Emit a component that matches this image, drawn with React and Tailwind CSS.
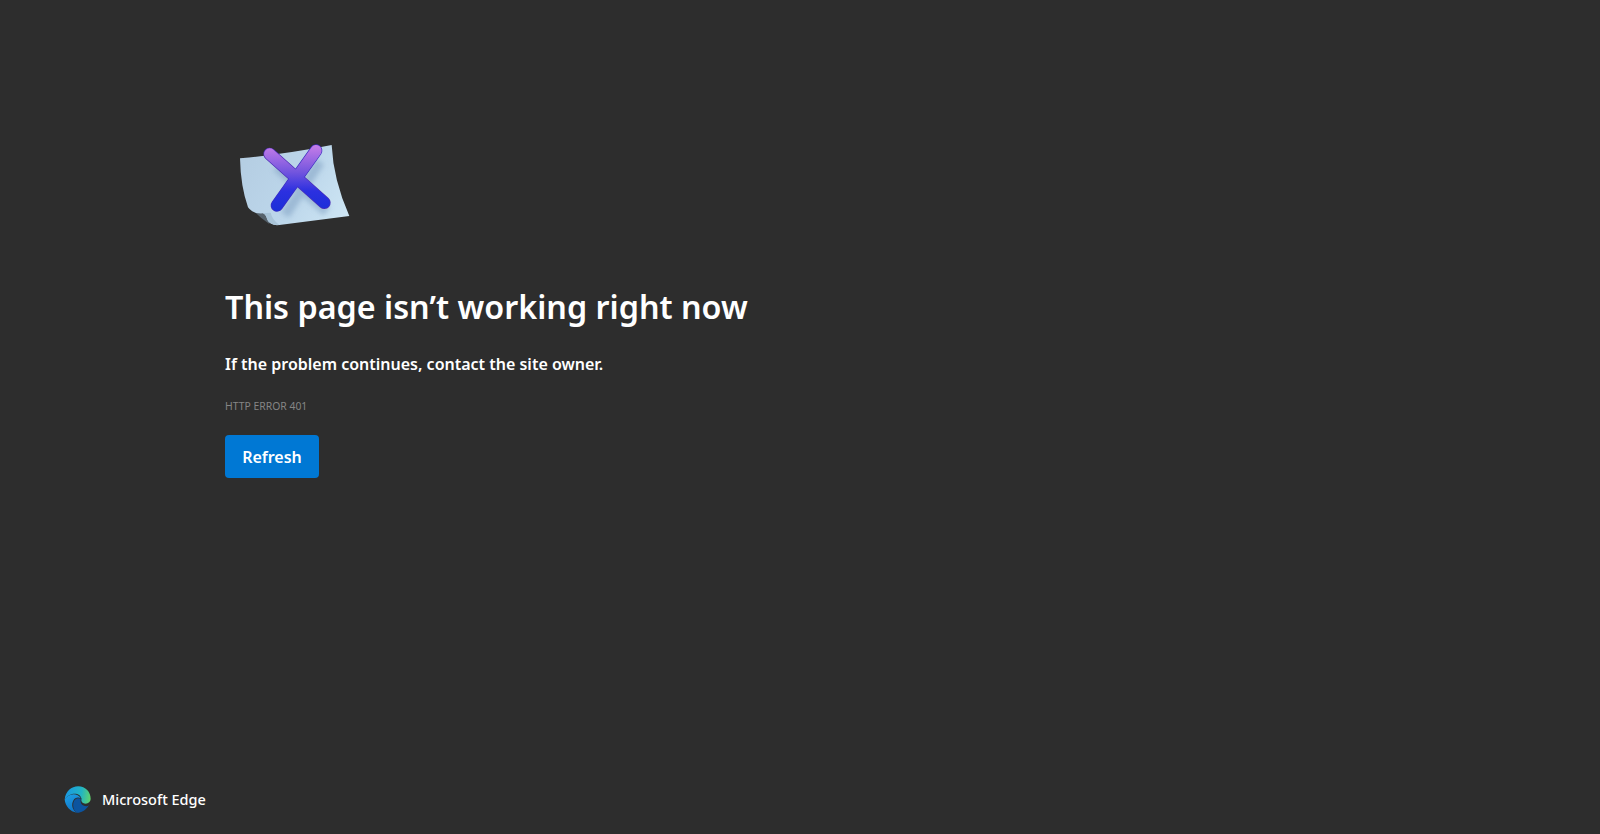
import React from 'react';

function ErrorIcon() {
  return (
    <svg width="120" height="92" viewBox="48 30 360 276" fill="none">
      <defs>
        <linearGradient id="paper" x1="60" y1="80" x2="388" y2="270" gradientUnits="userSpaceOnUse">
          <stop offset="0" stopColor="#b4cde2" />
          <stop offset="0.55" stopColor="#bdd7eb" />
          <stop offset="1" stopColor="#cfe7f5" />
        </linearGradient>
        <linearGradient id="cross" x1="230" y1="50" x2="230" y2="240" gradientUnits="userSpaceOnUse">
          <stop offset="0" stopColor="#c27be8" />
          <stop offset="0.4" stopColor="#7355de" />
          <stop offset="0.7" stopColor="#2c30e0" />
          <stop offset="1" stopColor="#1c2fd8" />
        </linearGradient>
        <filter id="blur" x="-20%" y="-20%" width="140%" height="140%">
          <feGaussianBlur stdDeviation="8" />
        </filter>
        <filter id="soft" x="-5%" y="-5%" width="110%" height="110%">
          <feGaussianBlur stdDeviation="1.8" />
        </filter>
      </defs>
      <path d="M104 246 Q122 264 148 282 L150 250 Z" fill="#56626c" filter="url(#soft)" />
      <g filter="url(#soft)">
        <path
          d="M60 85 Q200 72 335 45 Q340 150 388 258 L178 285 Q150 288 142 268 Q136 250 128 250 Q98 252 84 232 Q62 170 60 85 Z"
          fill="url(#paper)"
        />
        <path d="M128 250 Q138 252 142 270 Q150 286 178 285 Q156 268 152 248 Z" fill="#a9c4d8" />
      </g>
      <path d="M170 110 L320 245 M300 95 L195 255" stroke="#7b9dc0" strokeOpacity="0.5" strokeWidth="30" filter="url(#blur)" />
      <path d="M149 72 L313 218" stroke="#4c2fb5" strokeWidth="38" strokeLinecap="round" />
      <path d="M288 62 L171 226" stroke="#3a2cc0" strokeWidth="38" strokeLinecap="round" />
      <path d="M149 72 L313 218 M288 62 L171 226" stroke="url(#cross)" strokeWidth="34" strokeLinecap="round" />
    </svg>
  );
}

function EdgeLogo() {
  return (
    <svg width="27" height="27" viewBox="0 0 80 80" fill="none">
      <defs>
        <linearGradient id="edgeTop" x1="6" y1="30" x2="78" y2="40" gradientUnits="userSpaceOnUse">
          <stop offset="0" stopColor="#1a9be0" />
          <stop offset="0.6" stopColor="#22b4c4" />
          <stop offset="1" stopColor="#5fd36c" />
        </linearGradient>
        <linearGradient id="edgeLeft" x1="8" y1="30" x2="30" y2="76" gradientUnits="userSpaceOnUse">
          <stop offset="0" stopColor="#1c9be2" />
          <stop offset="1" stopColor="#0f74c8" />
        </linearGradient>
      </defs>
      <path d="M74 56 C64 74 48 80 38 79 C28 74 24 56 30 44 C34 36 42 34 50 38 C46 50 54 60 66 60 C69 60 72 58 74 56 Z" fill="#0c549f" />
      <path d="M2 40 C4 60 18 76 38 79 C26 72 20 56 28 42 C32 34 42 32 50 36 C44 26 30 22 20 26 C10 30 4 36 2 40 Z" fill="url(#edgeLeft)" />
      <path d="M2 40 C4 16 22 1 42 1 C64 1 79 18 79 38 C79 48 70 54 60 52 C52 50 50 44 52 38 C50 26 36 20 24 24 C14 27 6 34 2 40 Z" fill="url(#edgeTop)" />
    </svg>
  );
}

export default function App() {
  return (
    <div className="h-screen bg-[#2d2d2d] flex flex-col font-['Noto_Sans',sans-serif] text-white overflow-hidden">
      <main className="flex flex-col items-start pl-[225px] pt-[140px]">
        <div className="ml-[11px]">
          <ErrorIcon />
        </div>
        <h1 className="mt-[52px] text-[32.3px] leading-[44px] font-semibold text-white">This page isn’t working right now</h1>
        <p className="mt-[24px] text-[16px] leading-[24px] font-semibold">If the problem continues, contact the site owner.</p>
        <p className="mt-[22px] text-[10.4px] leading-[16px] text-[#858585]">HTTP ERROR 401</p>
        <button className="mt-[21px] w-[94px] h-[43px] rounded-[4px] bg-[#0078d4] text-[16px] font-semibold text-white">Refresh</button>
      </main>
      <footer className="mt-auto flex items-center gap-[11px] pl-[64px] pb-[21px]">
        <EdgeLogo />
        <span className="text-[14.5px] font-medium">Microsoft Edge</span>
      </footer>
    </div>
  );
}
